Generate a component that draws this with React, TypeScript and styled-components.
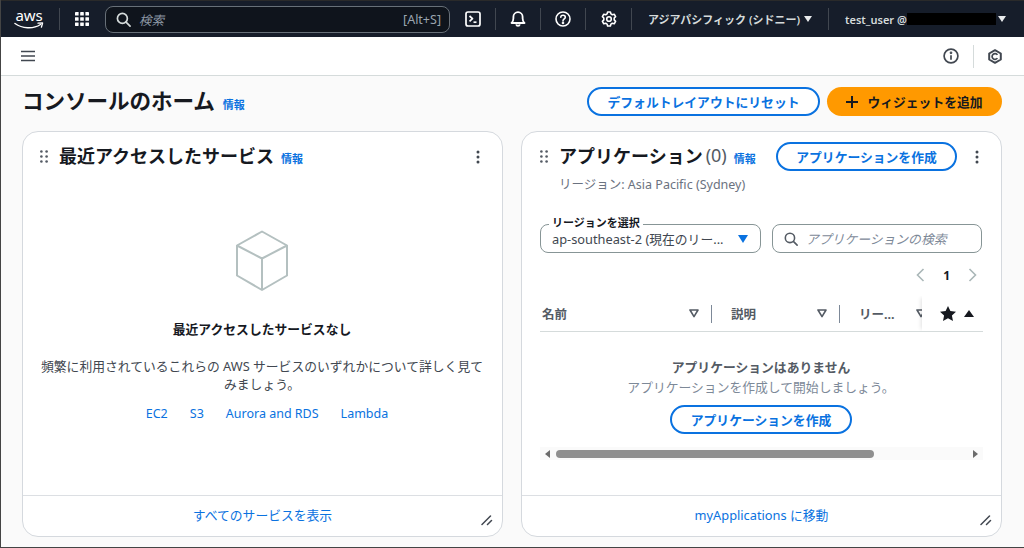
import React from 'react';
import styled, { createGlobalStyle } from 'styled-components';

const FONT = `"Noto Sans", "Noto Sans CJK JP", sans-serif`;
const BLUE = '#0a72e0';

const GlobalStyle = createGlobalStyle`
  html, body { margin: 0; padding: 0; background: #fff; }
  * { box-sizing: border-box; }
  body { font-family: ${FONT}; }
`;

function AwsLogo() {
  return (
    <LogoWrap>
      <LogoText>aws</LogoText>
      <svg width="30" height="9" viewBox="0 0 30 9" fill="none">
        <path d="M1 1.5C8 6.5 19 7.5 26.5 2.5" stroke="#fff" strokeWidth="1.5" strokeLinecap="round" />
        <path d="M24 1.2L28.6 1L27.4 5.2" stroke="#fff" strokeWidth="1.3" strokeLinejoin="round" strokeLinecap="round" />
      </svg>
    </LogoWrap>
  );
}

function GridIcon() {
  return (
    <svg width="16" height="16" viewBox="0 0 16 16" fill="#fff">
      {[1, 6.2, 11.4].flatMap((y) => [1, 6.2, 11.4].map((x) => <rect key={`${x}-${y}`} x={x} y={y} width="3.6" height="3.6" rx="0.4" />))}
    </svg>
  );
}

function SearchIcon({ color = '#d5dbdb', size = 15 }: { color?: string; size?: number }) {
  return (
    <svg width={size} height={size} viewBox="0 0 16 16" fill="none" stroke={color} strokeWidth="1.8">
      <circle cx="6.8" cy="6.8" r="5.3" />
      <path d="M10.7 10.7L15 15" strokeLinecap="round" />
    </svg>
  );
}

function ConsoleIcon() {
  return (
    <svg width="16" height="16" viewBox="0 0 16 16" fill="none" stroke="#fff" strokeWidth="1.7">
      <rect x="1" y="1" width="14" height="14" rx="2" />
      <path d="M4.5 5L7.5 7.7L4.5 10.4" strokeLinejoin="round" />
      <path d="M8.5 11.2H11.5" />
    </svg>
  );
}

function BellIcon() {
  return (
    <svg width="16" height="16" viewBox="0 0 16 16" fill="none" stroke="#fff" strokeWidth="1.8">
      <path d="M1.5 12H14.5C13 10.8 12.6 9.3 12.6 7.3V5.8A4.6 4.6 0 0 0 3.4 5.8V7.3C3.4 9.3 3 10.8 1.5 12Z" strokeLinejoin="round" />
      <path d="M6.2 13.3C6.5 15.2 9.5 15.2 9.8 13.3" />
    </svg>
  );
}

function HelpIcon() {
  return (
    <svg width="16" height="16" viewBox="0 0 16 16" fill="none" stroke="#fff" strokeWidth="1.6">
      <circle cx="8" cy="8" r="7" />
      <path d="M5.8 6.2C5.8 3.5 10.3 3.6 10.3 6.2C10.3 7.9 8 7.9 8 9.8" strokeLinecap="round" />
      <circle cx="8" cy="11.9" r="0.5" fill="#fff" />
    </svg>
  );
}

function GearIcon() {
  return (
    <svg width="16" height="16" viewBox="0 0 16 16" fill="none" stroke="#fff" strokeWidth="1.6" strokeLinejoin="round">
      <path d="M6.6 1H9.4L9.9 2.9L11.3 3.7L13.2 3.2L14.6 5.6L13.2 7V8.9L14.6 10.4L13.2 12.8L11.3 12.3L9.9 13.1L9.4 15H6.6L6.1 13.1L4.7 12.3L2.8 12.8L1.4 10.4L2.8 8.9V7L1.4 5.6L2.8 3.2L4.7 3.7L6.1 2.9Z" />
      <circle cx="8" cy="8" r="2.3" />
    </svg>
  );
}

function InfoCircleIcon() {
  return (
    <svg width="16" height="16" viewBox="0 0 16 16" fill="none" stroke="#414750" strokeWidth="1.7">
      <circle cx="8" cy="8" r="6.9" />
      <path d="M8 7.2V11.8" />
      <circle cx="8" cy="4.8" r="0.5" fill="#414750" />
    </svg>
  );
}

function HexIcon() {
  return (
    <svg width="14" height="15" viewBox="0 0 14 15" fill="none" stroke="#414750" strokeWidth="2">
      <path d="M7 1.2L12.8 4.5V10.5L7 13.8L1.2 10.5V4.5Z" strokeLinejoin="round" />
      <path d="M9.4 5.9A2.9 2.9 0 1 0 9.4 9.1" strokeWidth="1.7" />
    </svg>
  );
}

function MenuIcon() {
  return (
    <svg width="14" height="12" viewBox="0 0 14 12" stroke="#414750" strokeWidth="1.7">
      <path d="M0 1.5H14M0 6H14M0 10.5H14" />
    </svg>
  );
}

function GripIcon() {
  return (
    <svg width="8" height="13" viewBox="0 0 8 13" fill="#545b64">
      {[1.5, 6.5, 11.5].flatMap((y) => [1.4, 6.6].map((x) => <circle key={`${x}-${y}`} cx={x} cy={y} r="1.3" />))}
    </svg>
  );
}

function KebabIcon() {
  return (
    <svg width="4" height="14" viewBox="0 0 4 14" fill="#414750">
      <circle cx="2" cy="2" r="1.5" />
      <circle cx="2" cy="7" r="1.5" />
      <circle cx="2" cy="12" r="1.5" />
    </svg>
  );
}

function ResizeIcon() {
  return (
    <svg width="12" height="12" viewBox="0 0 12 12" stroke="#414750" strokeWidth="1.5" strokeLinecap="round">
      <path d="M1 10.5L9.5 2M6.5 10.5L10.5 6.5" />
    </svg>
  );
}

function BoxIcon() {
  return (
    <svg width="54" height="62" viewBox="0 0 54 62" fill="none" stroke="#b4c0c0" strokeWidth="2" strokeLinejoin="round">
      <path d="M27 1.5L52 15.5V45.5L27 60L2 45.5V15.5Z" />
      <path d="M2 15.5L27 28.5L52 15.5M27 28.5V60" />
    </svg>
  );
}

function SortIcon() {
  return (
    <svg width="10" height="9" viewBox="0 0 10 9" fill="none" stroke="#545b64" strokeWidth="1.6" strokeLinejoin="round">
      <path d="M1 1H9L5 7.6Z" />
    </svg>
  );
}

function ChevronIcon({ dir }: { dir: 'left' | 'right' }) {
  return (
    <svg width="9" height="14" viewBox="0 0 9 14" fill="none" stroke="#aab7b8" strokeWidth="1.6">
      <path d={dir === 'left' ? 'M7.5 1L1.5 7L7.5 13' : 'M1.5 1L7.5 7L1.5 13'} />
    </svg>
  );
}

function StarIcon() {
  return (
    <svg width="16" height="15" viewBox="0 0 16 15" fill="#16191f">
      <path d="M8 0L10.4 5L16 5.7L11.9 9.5L13 15L8 12.3L3 15L4.1 9.5L0 5.7L5.6 5Z" />
    </svg>
  );
}

function App() {
  return (
    <>
      <GlobalStyle />
      <Frame>
        <TopNav>
          <AwsLogo />
          <NavDivider $left={15} />
          <NavIconSlot $left={14}><GridIcon /></NavIconSlot>
          <SearchBar>
            <SearchIcon />
            <SearchPlaceholder>検索</SearchPlaceholder>
            <Shortcut>[Alt+S]</Shortcut>
          </SearchBar>
          <NavIconSlot $left={15}><ConsoleIcon /></NavIconSlot>
          <NavDivider $left={14} />
          <NavIconSlot $left={14}><BellIcon /></NavIconSlot>
          <NavDivider $left={14} />
          <NavIconSlot $left={14}><HelpIcon /></NavIconSlot>
          <NavDivider $left={14} />
          <NavIconSlot $left={15}><GearIcon /></NavIconSlot>
          <NavDivider $left={14} />
          <NavText $left={16} $width={151}>アジアパシフィック (シドニー)</NavText>
          <NavCaret $left={5} />
          <NavDivider $left={16} />
          <NavText $left={16} $width={60}>test_user @</NavText>
          <Redacted />
          <NavCaret $left={2} />
        </TopNav>

        <SubBar>
          <MenuIcon />
          <SubBarRight>
            <InfoCircleIcon />
            <SubDivider />
            <HexIcon />
          </SubBarRight>
        </SubBar>

        <Main>
          <TitleRow>
            <PageTitle>コンソールのホーム</PageTitle>
            <InfoLink>情報</InfoLink>
            <TitleActions>
              <OutlineButton $width={233}>デフォルトレイアウトにリセット</OutlineButton>
              <PrimaryButton>
                <PlusMark />
                ウィジェットを追加
              </PrimaryButton>
            </TitleActions>
          </TitleRow>

          <Cards>
            <Card>
              <CardBody>
                <CardHeader>
                  <GripIcon />
                  <CardTitle>最近アクセスしたサービス</CardTitle>
                  <CardInfo>情報</CardInfo>
                  <KebabSlot><KebabIcon /></KebabSlot>
                </CardHeader>
                <EmptyServices>
                  <BoxIcon />
                  <EmptyTitle>最近アクセスしたサービスなし</EmptyTitle>
                  <EmptyText>
                    頻繁に利用されているこれらの AWS サービスのいずれかについて詳しく見てみましょう。
                  </EmptyText>
                  <ServiceLinks>
                    <ServiceLink>EC2</ServiceLink>
                    <ServiceLink>S3</ServiceLink>
                    <ServiceLink>Aurora and RDS</ServiceLink>
                    <ServiceLink>Lambda</ServiceLink>
                  </ServiceLinks>
                </EmptyServices>
              </CardBody>
              <CardFooter>
                <TextLink>すべてのサービスを表示</TextLink>
                <ResizeHandle><ResizeIcon /></ResizeHandle>
              </CardFooter>
            </Card>

            <Card>
              <AppCardBody>
                <CardHeader>
                  <GripIcon />
                  <CardTitle>アプリケーション</CardTitle>
                  <Count>(0)</Count>
                  <CardInfo>情報</CardInfo>
                  <HeaderButton>
                    <OutlineButton $width={181}>アプリケーションを作成</OutlineButton>
                  </HeaderButton>
                  <AppKebab><KebabIcon /></AppKebab>
                </CardHeader>
                <RegionNote>リージョン: Asia Pacific (Sydney)</RegionNote>
                <FilterRow>
                  <SelectBox>
                    <FloatingLabel>リージョンを選択</FloatingLabel>
                    <SelectValue>ap-southeast-2 (現在のリー...</SelectValue>
                    <BlueCaret />
                  </SelectBox>
                  <FilterInput>
                    <SearchIcon color="#545b64" size={14} />
                    <FilterPlaceholder>アプリケーションの検索</FilterPlaceholder>
                  </FilterInput>
                </FilterRow>
                <Pager>
                  <ChevronIcon dir="left" />
                  <PageNumber>1</PageNumber>
                  <ChevronIcon dir="right" />
                </Pager>
                <TableHead>
                  <HeadCell $width={171}>
                    <HeadLabel>名前</HeadLabel>
                    <SortIcon />
                  </HeadCell>
                  <HeadRule />
                  <HeadCell $width={127} $indent={19}>
                    <HeadLabel>説明</HeadLabel>
                    <SortIcon />
                  </HeadCell>
                  <HeadRule />
                  <HeadCell $width={98} $indent={19}>
                    <HeadLabel>リー...</HeadLabel>
                    <SortIcon />
                  </HeadCell>
                  <StickyCol>
                    <StarIcon />
                    <UpTriangle />
                  </StickyCol>
                </TableHead>
                <EmptyApps>
                  <EmptyAppsTitle>アプリケーションはありません</EmptyAppsTitle>
                  <EmptyAppsText>アプリケーションを作成して開始しましょう。</EmptyAppsText>
                  <OutlineButton $width={182}>アプリケーションを作成</OutlineButton>
                </EmptyApps>
                <ScrollTrack>
                  <ScrollArrow $dir="left" />
                  <ScrollThumb />
                  <ScrollArrow $dir="right" />
                </ScrollTrack>
              </AppCardBody>
              <CardFooter>
                <TextLink>myApplications に移動</TextLink>
                <ResizeHandle><ResizeIcon /></ResizeHandle>
              </CardFooter>
            </Card>
          </Cards>
        </Main>
      </Frame>
    </>
  );
}

const Frame = styled.div`
  width: 1024px;
  height: 548px;
  display: flex;
  flex-direction: column;
  overflow: hidden;
  border-left: 1px solid #444;
  border-bottom: 1px solid #444;
  background: #fafafa;
`;

const TopNav = styled.header`
  height: 37px;
  flex-shrink: 0;
  display: flex;
  align-items: center;
  background: #161d2a;
  border-top: 1px solid #2a2a2a;
  padding-left: 13px;
`;

const LogoWrap = styled.div`
  width: 30px;
  display: flex;
  flex-direction: column;
  align-items: center;
  color: #fff;
`;

const LogoText = styled.span`
  font-size: 15px;
  line-height: 14px;
  height: 14px;
  letter-spacing: -0.2px;
`;

const NavDivider = styled.span<{ $left: number }>`
  width: 1px;
  height: 22px;
  margin-left: ${(p) => p.$left}px;
  background: #414750;
`;

const NavIconSlot = styled.span<{ $left: number }>`
  display: flex;
  margin-left: ${(p) => p.$left}px;
`;

const SearchBar = styled.div`
  width: 345px;
  height: 27px;
  margin-left: 15px;
  display: flex;
  align-items: center;
  padding: 0 8px 0 10px;
  background: #0f141c;
  border: 1.5px solid #687078;
  border-radius: 8px;
`;

const SearchPlaceholder = styled.span`
  margin-left: 8px;
  font-size: 12.5px;
  font-style: italic;
  color: #8d98a5;
`;

const Shortcut = styled.span`
  margin-left: auto;
  font-size: 12.5px;
  color: #9aa4af;
`;

const NavText = styled.span<{ $left: number; $width: number }>`
  width: ${(p) => p.$width}px;
  margin-left: ${(p) => p.$left}px;
  font-size: 11px;
  font-weight: 600;
  color: #d5dbdb;
  white-space: nowrap;
`;

const NavCaret = styled.span<{ $left: number }>`
  width: 0;
  height: 0;
  margin-left: ${(p) => p.$left}px;
  border-left: 4px solid transparent;
  border-right: 4px solid transparent;
  border-top: 6px solid #e9ebed;
`;

const Redacted = styled.span`
  width: 89px;
  height: 12px;
  margin-left: 2px;
  background: #000;
`;

const SubBar = styled.div`
  height: 39px;
  flex-shrink: 0;
  display: flex;
  align-items: center;
  justify-content: space-between;
  padding: 0 22px 0 20px;
  background: #fff;
  border-bottom: 1px solid #d5dbdb;
`;

const SubBarRight = styled.div`
  display: flex;
  align-items: center;
  gap: 14px;
`;

const SubDivider = styled.span`
  width: 1px;
  height: 23px;
  background: #d5dbdb;
`;

const Main = styled.main`
  flex: 1;
  display: flex;
  flex-direction: column;
  padding: 0 22px 10px 21px;
  min-height: 0;
`;

const TitleRow = styled.div`
  height: 55px;
  flex-shrink: 0;
  display: flex;
  align-items: center;
  padding-bottom: 4px;
`;

const PageTitle = styled.h1`
  margin: 0 0 4px;
  font-size: 21.6px;
  font-weight: 700;
  color: #16191f;
  letter-spacing: -0.1px;
`;

const InfoLink = styled.a`
  margin: 5px 0 0 8px;
  font-size: 11px;
  font-weight: 700;
  color: ${BLUE};
`;

const CardInfo = styled(InfoLink)`
  margin: 3px 0 0 7px;
`;

const TitleActions = styled.div`
  margin-left: auto;
  display: flex;
  gap: 7px;
`;

const OutlineButton = styled.button<{ $width: number }>`
  width: ${(p) => p.$width}px;
  height: 29px;
  padding: 0;
  flex-shrink: 0;
  border: 2px solid ${BLUE};
  border-radius: 15px;
  background: #fff;
  font-family: ${FONT};
  font-size: 12.8px;
  font-weight: 700;
  color: ${BLUE};
`;

const PrimaryButton = styled.button`
  width: 175px;
  height: 29px;
  display: flex;
  align-items: center;
  justify-content: center;
  gap: 9px;
  padding: 0;
  border: none;
  border-radius: 15px;
  background: #ff9900;
  font-family: ${FONT};
  font-size: 12.8px;
  font-weight: 700;
  color: #16191f;
`;

const PlusMark = styled.span`
  width: 12px;
  height: 12px;
  background:
    linear-gradient(#16191f, #16191f) center / 12px 2px no-repeat,
    linear-gradient(#16191f, #16191f) center / 2px 12px no-repeat;
`;

const Cards = styled.div`
  flex: 1;
  min-height: 0;
  display: grid;
  grid-template-columns: 481px 481px;
  column-gap: 18px;
`;

const Card = styled.section`
  display: flex;
  flex-direction: column;
  background: #fff;
  border: 1px solid #d5d9de;
  border-radius: 16px;
  overflow: hidden;
`;

const CardBody = styled.div`
  flex: 1;
  min-height: 0;
  padding: 10px 18px 0 17px;
  display: flex;
  flex-direction: column;
`;

const AppCardBody = styled(CardBody)`
  padding-left: 18px;
`;

const CardHeader = styled.div`
  height: 29px;
  flex-shrink: 0;
  display: flex;
  align-items: center;
`;

const CardTitle = styled.h2`
  margin: 0 0 4px 11px;
  font-size: 18px;
  font-weight: 700;
  color: #16191f;
  white-space: nowrap;
`;

const Count = styled.span`
  margin: 0 0 4px 3px;
  font-size: 18px;
  color: #545b64;
`;

const KebabSlot = styled.span`
  display: flex;
  margin-left: auto;
  margin-right: 4px;
`;

const AppKebab = styled(KebabSlot)`
  margin-left: 18px;
`;

const HeaderButton = styled.span`
  display: flex;
  margin-left: auto;
`;

const EmptyServices = styled.div`
  display: flex;
  flex-direction: column;
  align-items: center;
  padding-top: 59px;
`;

const EmptyTitle = styled.div`
  margin-top: 28px;
  font-size: 12.8px;
  font-weight: 700;
  line-height: 18px;
  color: #16191f;
`;

const EmptyText = styled.p`
  width: 445px;
  margin: 19px 0 0;
  font-size: 12.8px;
  line-height: 18px;
  text-align: center;
  color: #414750;
`;

const ServiceLinks = styled.div`
  display: flex;
  gap: 22px;
  margin-top: 12px;
  padding-left: 10px;
`;

const TextLink = styled.a`
  font-size: 12.8px;
  line-height: 18px;
  color: ${BLUE};
`;

const ServiceLink = styled(TextLink)`
  font-size: 12.5px;
`;

const CardFooter = styled.footer`
  position: relative;
  height: 41px;
  flex-shrink: 0;
  display: flex;
  align-items: center;
  justify-content: center;
  padding-bottom: 2px;
  border-top: 1px solid #dcdfe3;
`;

const ResizeHandle = styled.span`
  position: absolute;
  right: 9px;
  bottom: 10px;
  display: flex;
`;

const RegionNote = styled.div`
  margin: 5px 0 0 19px;
  font-size: 12.5px;
  line-height: 18px;
  color: #6b7280;
`;

const FilterRow = styled.div`
  display: flex;
  gap: 11px;
  margin-top: 30px;
`;

const SelectBox = styled.div`
  position: relative;
  width: 221px;
  height: 29px;
  display: flex;
  align-items: center;
  padding: 0 11px;
  border: 1px solid #879596;
  border-radius: 8px;
`;

const FloatingLabel = styled.span`
  position: absolute;
  top: -9px;
  left: 8px;
  padding: 0 3px;
  background: #fff;
  font-size: 11px;
  font-weight: 700;
  line-height: 14px;
  color: #16191f;
`;

const SelectValue = styled.span`
  font-size: 12.8px;
  color: #414750;
  white-space: nowrap;
`;

const BlueCaret = styled.span`
  margin-left: auto;
  margin-right: 1px;
  border-left: 5.5px solid transparent;
  border-right: 5.5px solid transparent;
  border-top: 8px solid ${BLUE};
`;

const FilterInput = styled.div`
  width: 210px;
  height: 29px;
  display: flex;
  align-items: center;
  padding: 0 11px;
  border: 1px solid #879596;
  border-radius: 8px;
`;

const FilterPlaceholder = styled.span`
  margin-left: 8px;
  font-size: 12.8px;
  font-style: italic;
  color: #7d8998;
  white-space: nowrap;
`;

const Pager = styled.div`
  height: 18px;
  margin-top: 13px;
  margin-right: 6px;
  display: flex;
  align-items: center;
  justify-content: flex-end;
  gap: 18px;
`;

const PageNumber = styled.span`
  font-size: 12px;
  font-weight: 700;
  color: #16191f;
`;

const TableHead = styled.div`
  position: relative;
  height: 36px;
  margin-top: 12px;
  display: flex;
  align-items: center;
  border-bottom: 1px solid #d5dbdb;
  overflow: hidden;
`;

const HeadCell = styled.div<{ $width: number; $indent?: number }>`
  width: ${(p) => p.$width}px;
  flex-shrink: 0;
  display: flex;
  align-items: center;
  justify-content: space-between;
  padding-left: ${(p) => p.$indent ?? 2}px;
  padding-right: 12px;
`;

const HeadLabel = styled.span`
  font-size: 12.5px;
  font-weight: 700;
  color: #545b64;
  white-space: nowrap;
`;

const HeadRule = styled.span`
  width: 1px;
  height: 18px;
  flex-shrink: 0;
  background: #7d8998;
`;

const StickyCol = styled.div`
  position: absolute;
  top: 0;
  right: 0;
  bottom: 0;
  width: 61px;
  display: flex;
  align-items: center;
  gap: 8px;
  padding-left: 18px;
  background: #fff;
  box-shadow: -3px 0 4px -2px rgba(0, 0, 0, 0.12);
`;

const UpTriangle = styled.span`
  border-left: 5px solid transparent;
  border-right: 5px solid transparent;
  border-bottom: 7px solid #16191f;
`;

const EmptyApps = styled.div`
  display: flex;
  flex-direction: column;
  align-items: center;
  padding-top: 26px;
  margin-right: 1px;
`;

const EmptyAppsTitle = styled.div`
  font-size: 12.8px;
  font-weight: 700;
  line-height: 18px;
  color: #545b64;
`;

const EmptyAppsText = styled.div`
  margin-top: 2px;
  margin-bottom: 9px;
  font-size: 12.8px;
  line-height: 18px;
  color: #7d8998;
`;

const ScrollTrack = styled.div`
  height: 13px;
  margin-top: 13px;
  display: flex;
  align-items: center;
  padding: 0 5px;
  background: #fafafa;
`;

const ScrollThumb = styled.span`
  width: 318px;
  height: 8px;
  margin-left: 6px;
  border-radius: 4px;
  background: #8f8f8f;
`;

const ScrollArrow = styled.span<{ $dir: 'left' | 'right' }>`
  border-top: 4px solid transparent;
  border-bottom: 4px solid transparent;
  ${(p) => (p.$dir === 'left' ? 'border-right: 5px solid #6b6b6b;' : 'border-left: 5px solid #6b6b6b; margin-left: auto;')}
`;

export default App;
